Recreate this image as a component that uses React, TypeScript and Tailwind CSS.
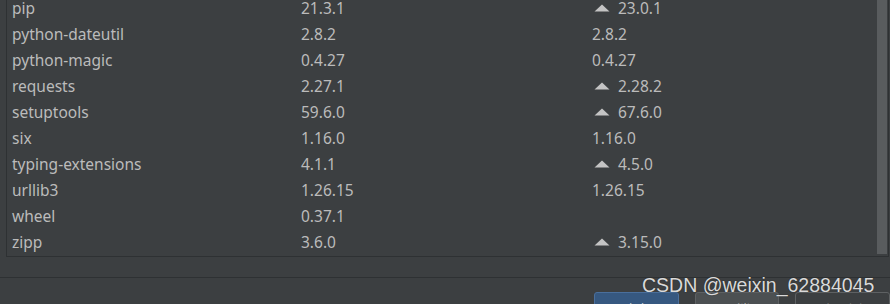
import React from 'react';

type Pkg = { name: string; version: string; latest: string; upgrade?: boolean };

const packages: Pkg[] = [
  { name: 'pip', version: '21.3.1', latest: '23.0.1', upgrade: true },
  { name: 'python-dateutil', version: '2.8.2', latest: '2.8.2' },
  { name: 'python-magic', version: '0.4.27', latest: '0.4.27' },
  { name: 'requests', version: '2.27.1', latest: '2.28.2', upgrade: true },
  { name: 'setuptools', version: '59.6.0', latest: '67.6.0', upgrade: true },
  { name: 'six', version: '1.16.0', latest: '1.16.0' },
  { name: 'typing-extensions', version: '4.1.1', latest: '4.5.0', upgrade: true },
  { name: 'urllib3', version: '1.26.15', latest: '1.26.15' },
  { name: 'wheel', version: '0.37.1', latest: '' },
  { name: 'zipp', version: '3.6.0', latest: '3.15.0', upgrade: true },
];

const UpArrow = () => (
  <svg width="16" height="8" viewBox="0 0 16 8" className="mr-[8px] ml-[2px] -mt-[2px]">
    <polygon points="8,0.5 15.5,7.5 0.5,7.5" fill="#c4c4c4" />
  </svg>
);

export default function App() {
  return (
    <div className="relative w-[890px] h-[304px] overflow-hidden bg-[#3c3f41] font-['Noto_Sans','Liberation_Sans',sans-serif] text-[15.5px] text-[#bbbbbb]">
      {/* package table */}
      <div className="relative ml-[6px] w-[883px] h-[257px] border-l border-r border-b border-[#2e3133] overflow-hidden">
        <div className="-mt-[4px]">
          {packages.map((p) => (
            <div key={p.name} className="flex items-center h-[26px] pl-[5px]">
              <div className="w-[289px]">{p.name}</div>
              <div className="w-[291px]">{p.version}</div>
              <div className="flex items-center">
                {p.upgrade && <UpArrow />}
                <span>{p.latest}</span>
              </div>
            </div>
          ))}
        </div>
        <div className="absolute right-[1px] top-0 w-[10px] h-[254px] bg-[#595c5e]" />
      </div>

      {/* footer */}
      <div className="mt-[20px] border-t border-[#2e3133] pt-[14px] pl-[594px] flex gap-[16px] font-['Noto_Sans_CJK_SC',sans-serif] text-[13px]">
        <button className="w-[89px] h-[28px] rounded-[3px] bg-[#365880] border border-[#4a6f9c] text-[#e0e0e0] pt-[5px] leading-[16px]">确定</button>
        <button className="w-[89px] h-[28px] rounded-[3px] bg-[#4c5052] border border-[#5e6163] text-[#bbbbbb] pt-[5px] leading-[16px]">取消</button>
        <button className="w-[100px] h-[28px] rounded-[3px] bg-[#3c3f41] border border-[#5e6163] text-[#777777] pt-[5px] leading-[16px]">应用(A)</button>
      </div>

      {/* watermark */}
      <div className="absolute left-[642px] top-[275px] leading-[20px] text-[19.5px] font-['Liberation_Sans',sans-serif] text-[#dadada] [text-shadow:0_0_1px_#222]">
        CSDN @weixin_62884045
      </div>
    </div>
  );
}
